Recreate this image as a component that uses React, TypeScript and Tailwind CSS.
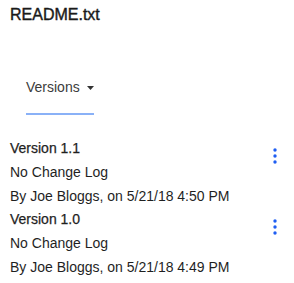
import React from "react";

// ─── Data ─────────────────────────────────────────────────────────────────────

const versions = [
  { label: "Version 1.1", log: "No Change Log", by: "By Joe Bloggs, on 5/21/18 4:50 PM" },
  { label: "Version 1.0", log: "No Change Log", by: "By Joe Bloggs, on 5/21/18 4:49 PM" },
];

// ─── Kebab icon ───────────────────────────────────────────────────────────────

function Kebab() {
  return (
    <svg width="6" height="18" viewBox="0 0 6 18" className="shrink-0 mt-[11px]">
      <circle cx="3" cy="3" r="1.7" fill="#1f5ef2" />
      <circle cx="3" cy="9" r="1.7" fill="#1f5ef2" />
      <circle cx="3" cy="15" r="1.7" fill="#1f5ef2" />
    </svg>
  );
}

// ─── App ──────────────────────────────────────────────────────────────────────

export default function App() {
  return (
    <div className="w-[294px] h-[283px] bg-white overflow-hidden font-['Liberation_Sans',Arial,sans-serif] text-[#222]">
      {/* Title */}
      <h1 className="px-[10px] pt-[5px] text-[16px] leading-[20px] text-[#1a1a1a] [-webkit-text-stroke:0.4px_#1a1a1a]">
        README.txt
      </h1>

      {/* Tabs */}
      <div className="pl-[26px] mt-[50px]">
        <div className="inline-flex flex-col">
          <div className="flex items-center gap-[7px] text-[14px] leading-[20px] text-[#3c3c3c]">
            <span>Versions</span>
            <svg width="7" height="4" viewBox="0 0 7 4" className="mt-[1px]">
              <path d="M0 0h7L3.5 4z" fill="#333" />
            </svg>
          </div>
          <div className="mt-[16px] h-[2px] bg-[#8ab1f7]" />
        </div>
      </div>

      {/* Version list */}
      <div className="mt-[21px] flex flex-col">
        {versions.map((v) => (
          <div key={v.label} className="flex justify-between pl-[10px] pr-[16px] h-[71px]">
            <div className="text-[14px] leading-[24px] text-[#1f1f1f]">
              <p className="[-webkit-text-stroke:0.25px_#1f1f1f]">{v.label}</p>
              <p>{v.log}</p>
              <p>{v.by}</p>
            </div>
            <Kebab />
          </div>
        ))}
      </div>
    </div>
  );
}
